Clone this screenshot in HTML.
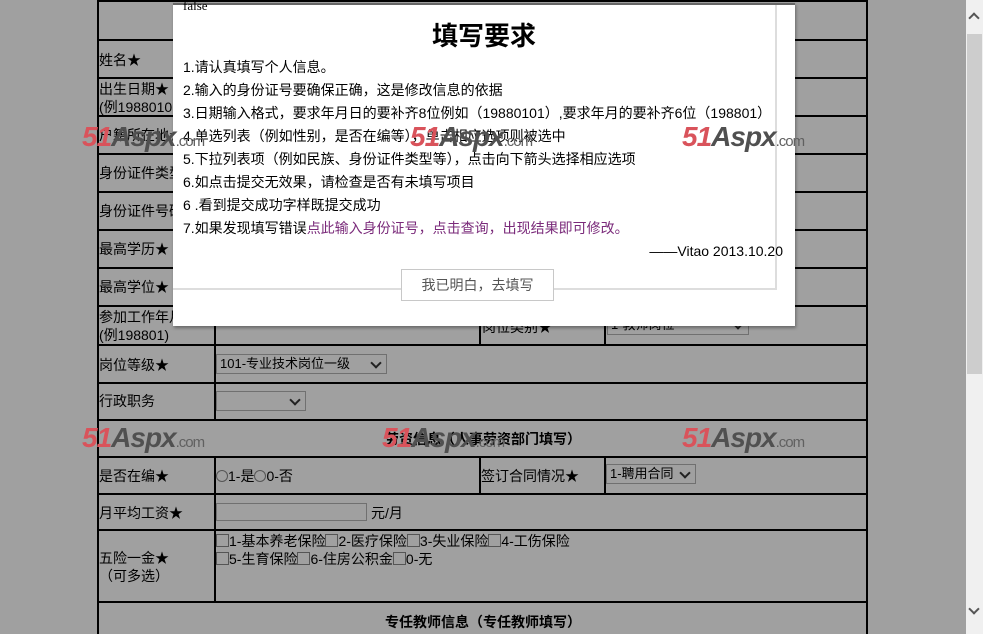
<!DOCTYPE html>
<html><head><meta charset="utf-8"><style>
*{margin:0;padding:0;box-sizing:border-box}
body{width:983px;height:634px;overflow:hidden;background:#a0a0a0;position:relative;font-family:"Liberation Sans","Noto Sans CJK SC",sans-serif;font-size:14px;color:#000}
.a{position:absolute}
.h{position:absolute;height:2px;background:#000}
.v{position:absolute;width:2px;background:#000}
.l{position:absolute;left:99px;font-size:14px;line-height:18px;white-space:nowrap}
.sel{position:absolute;border:1px solid #707070;background:#a0a0a0;height:20px;font-size:13px;line-height:18px;padding-left:3px}
.sel:after{content:"";position:absolute;right:6px;top:4px;width:6px;height:6px;border-right:2px solid #222;border-bottom:2px solid #222;transform:rotate(45deg)}
.wm{position:absolute;font-family:"Liberation Sans",sans-serif;font-style:italic;font-weight:bold;font-size:28px;letter-spacing:-1px;white-space:nowrap;line-height:30px}
.wm b{color:#d9535b}.wm i{color:#505050}.wm s{text-decoration:none;font-size:15px;font-weight:normal;font-style:normal;color:#606060}
.cb{display:inline-block;width:13px;height:13px;border:1px solid #555;vertical-align:-1px}
.rd{display:inline-block;width:12px;height:12px;border:1px solid #555;border-radius:50%;vertical-align:-1px}
.m p{position:absolute;left:10px;font-size:14px;line-height:18px;white-space:nowrap}
</style></head><body>
<!-- table lines -->
<div class="v" style="left:97px;top:0;height:634px"></div>
<div class="v" style="left:866px;top:0;height:634px"></div>
<div class="h" style="left:97px;width:771px;top:0"></div>
<div class="h" style="left:97px;width:771px;top:39px"></div>
<div class="h" style="left:97px;width:771px;top:77px"></div>
<div class="h" style="left:97px;width:771px;top:115px"></div>
<div class="h" style="left:97px;width:771px;top:153px"></div>
<div class="h" style="left:97px;width:771px;top:191px"></div>
<div class="h" style="left:97px;width:771px;top:229px"></div>
<div class="h" style="left:97px;width:771px;top:267px"></div>
<div class="h" style="left:97px;width:771px;top:305px"></div>
<div class="h" style="left:97px;width:771px;top:344px"></div>
<div class="h" style="left:97px;width:771px;top:382px"></div>
<div class="h" style="left:97px;width:771px;top:419px"></div>
<div class="h" style="left:97px;width:771px;top:456px"></div>
<div class="h" style="left:97px;width:771px;top:493px"></div>
<div class="h" style="left:97px;width:771px;top:529px"></div>
<div class="h" style="left:97px;width:771px;top:601px"></div>
<div class="v" style="left:214px;top:40px;height:380px"></div>
<div class="v" style="left:214px;top:457px;height:145px"></div>
<div class="v" style="left:479px;top:306px;height:39px"></div>
<div class="v" style="left:604px;top:306px;height:39px"></div>
<div class="v" style="left:479px;top:457px;height:37px"></div>
<div class="v" style="left:604px;top:457px;height:37px"></div>
<!-- labels -->
<div class="l" style="top:51px">姓名★</div>
<div class="l" style="top:80px">出生日期★<br>(例19880101)</div>
<div class="l" style="top:126px">户籍所在地★</div>
<div class="l" style="top:164px">身份证件类型★</div>
<div class="l" style="top:202px">身份证件号码★</div>
<div class="l" style="top:240px">最高学历★</div>
<div class="l" style="top:278px">最高学位★</div>
<div class="l" style="top:308px">参加工作年月★<br>(例198801)</div>
<div class="l" style="left:482px;top:318px">岗位类别★</div>
<div class="sel" style="left:607px;top:315px;width:142px">1-教师岗位</div>
<div class="l" style="top:356px">岗位等级★</div>
<div class="sel" style="left:216px;top:354px;width:171px">101-专业技术岗位一级</div>
<div class="l" style="top:392px">行政职务</div>
<div class="sel" style="left:216px;top:391px;width:90px"></div>
<div class="a" style="left:385px;top:429px;font-weight:bold;font-size:14px">劳资信息（人事劳资部门填写）</div>
<div class="l" style="top:467px">是否在编★</div>
<div class="a" style="left:216px;top:467px;line-height:18px"><span class="rd"></span>1-是<span class="rd"></span>0-否</div>
<div class="l" style="left:481px;top:467px">签订合同情况★</div>
<div class="sel" style="left:606px;top:464px;width:90px">1-聘用合同</div>
<div class="l" style="top:504px">月平均工资★</div>
<div class="a" style="left:216px;top:503px;width:151px;height:18px;border:1px solid #707070"></div>
<div class="a" style="left:371px;top:504px;line-height:18px">元/月</div>
<div class="l" style="top:549px">五险一金★<br>（可多选）</div>
<div class="a" style="left:216px;top:532px;line-height:18px;white-space:nowrap"><span class="cb"></span>1-基本养老保险<span class="cb"></span>2-医疗保险<span class="cb"></span>3-失业保险<span class="cb"></span>4-工伤保险<br><span class="cb"></span>5-生育保险<span class="cb"></span>6-住房公积金<span class="cb"></span>0-无</div>
<div class="a" style="left:385px;top:612px;font-weight:bold">专任教师信息（专任教师填写）</div>
<!-- modal -->
<div class="a m" style="left:173px;top:3px;width:622px;height:323px;background:#fff;border-top:2px solid #666;box-shadow:1px 2px 3px rgba(0,0,0,.35)">
<div class="a" style="left:10px;top:-6px;font-family:'Liberation Serif',serif;font-size:13px;line-height:14px">false</div>
<div class="a" style="left:602px;top:0;width:2px;height:285px;background:#ddd"></div>
<div class="a" style="left:0;top:283px;width:604px;height:2px;background:#ddd"></div>
<div class="a" style="left:0;width:622px;top:15px;text-align:center;font-size:26px;font-weight:bold;line-height:32px">填写要求</div>
<p style="top:53px">1.请认真填写个人信息。</p>
<p style="top:76px">2.输入的身份证号要确保正确，这是修改信息的依据</p>
<p style="top:99px">3.日期输入格式，要求年月日的要补齐8位例如（19880101）,要求年月的要补齐6位（198801）</p>
<p style="top:122px">4.单选列表（例如性别，是否在编等），单击相应选项则被选中</p>
<p style="top:145px">5.下拉列表项（例如民族、身份证件类型等），点击向下箭头选择相应选项</p>
<p style="top:168px">6.如点击提交无效果，请检查是否有未填写项目</p>
<p style="top:191px">6 .看到提交成功字样既提交成功</p>
<p style="top:214px">7.如果发现填写错误<span style="color:#7a2a7a">点此输入身份证号，点击查询，出现结果即可修改。</span></p>
<p style="top:237px;left:auto;right:12px">——Vitao 2013.10.20</p>
<div class="a" style="left:228px;top:264px;width:153px;height:32px;border:1px solid #c8c8c8;background:#fff;color:#555;text-align:center;line-height:30px;font-size:14px">我已明白，去填写</div>
</div>
<!-- watermarks -->
<div class="wm" style="left:82px;top:122px"><b>51</b><i>Aspx</i><s>.com</s></div>
<div class="wm" style="left:410px;top:122px"><b>51</b><i>Aspx</i><s>.com</s></div>
<div class="wm" style="left:682px;top:122px"><b>51</b><i>Aspx</i><s>.com</s></div>
<div class="wm" style="left:82px;top:423px"><b>51</b><i>Aspx</i><s>.com</s></div>
<div class="wm" style="left:382px;top:423px"><b>51</b><i>Aspx</i><s>.com</s></div>
<div class="wm" style="left:682px;top:423px"><b>51</b><i>Aspx</i><s>.com</s></div>
<!-- scrollbar -->
<div class="a" style="left:966px;top:0;width:17px;height:634px;background:#f0f0f0"></div>
<div class="a" style="left:967px;top:34px;width:15px;height:340px;background:#cdcdcd"></div>
<div class="a" style="left:970px;top:14px;width:8px;height:8px;border-left:2px solid #555;border-top:2px solid #555;transform:rotate(45deg)"></div>
<div class="a" style="left:970px;top:605px;width:8px;height:8px;border-right:2px solid #555;border-bottom:2px solid #555;transform:rotate(45deg)"></div>
</body></html>
